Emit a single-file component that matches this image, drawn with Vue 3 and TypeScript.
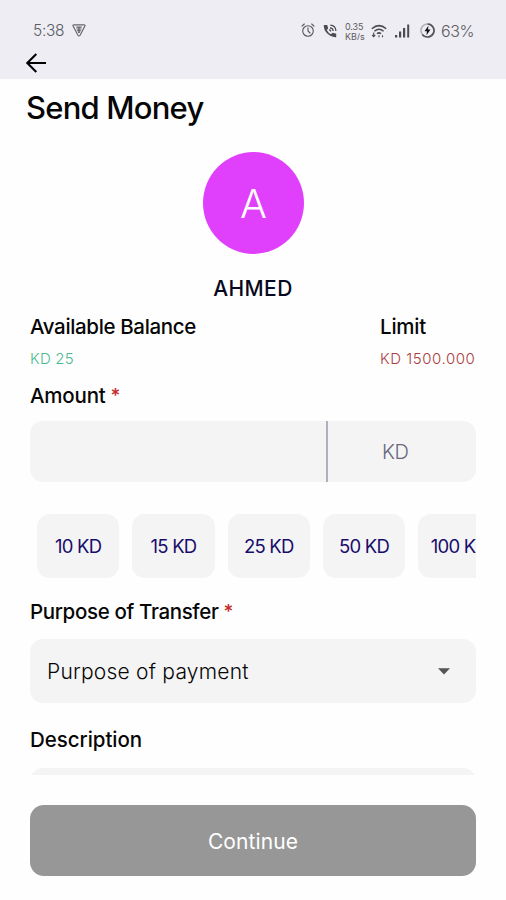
<script setup lang="ts">
import { ref } from 'vue'

interface QuickAmount {
  value: number
  label: string
}

const quickAmounts: QuickAmount[] = [10, 15, 25, 50, 100].map((value) => ({
  value,
  label: `${value} KD`,
}))

const amount = ref('')

function pick(option: QuickAmount): void {
  amount.value = String(option.value)
}
</script>

<template>
  <div class="screen">
    <header class="top">
      <div class="status">
        <span class="clock">5:38</span>
        <svg class="badge" width="14" height="13" viewBox="0 0 14 13" fill="none" stroke="#66666a">
          <path d="M2 .8h10q1.5 0 .9 1.3L8.2 11Q7 13 5.800 11L1.100 2.100Q.5.8 2 .8z" stroke-width="1.200" />
          <path d="M4.300 3.200h5.400M4.500 5h5M5.200 6.700h3.600M6.200 8.400h1.600" stroke-width="1.200" />
          <path d="M7 3v6" stroke-width="1.300" />
        </svg>
        <span class="spacer"></span>
        <svg class="alarm" width="14" height="15" viewBox="0 0 14 15" fill="none" stroke="#55555a" stroke-width="1.100" stroke-linecap="round">
          <circle cx="7" cy="8" r="5.300" />
          <path d="M7 4.800V8l2 2M1 3.200 3.300 1M13 3.200 10.700 1" />
        </svg>
        <svg class="call" width="14" height="14" viewBox="0 0 14 14" fill="none">
          <path d="M.8 1h3.400l1 3.400L3.700 6q1.500 2.900 4.300 4.300l1.600-1.500 3.600 1v3.400Q8.500 13.800 4.500 9.800T.8 1z" fill="#4b4b50" />
          <path d="M7.300 1.200q5.400.3 5.600 5.800M7 3.900q3 .1 3.200 3.100" stroke="#4b4b50" stroke-width="1.200" />
          <path d="M6.300 5.500 8 7.200" stroke="#4b4b50" stroke-width="1.300" />
        </svg>
        <span class="speed"><span>0.35</span><span>KB/s</span></span>
        <svg class="wifi" width="16" height="14" viewBox="0 0 16 14" fill="none" stroke="#4b4b50" stroke-width="1.500">
          <path d="M.8 4.800Q8-1.500 15.200 4.800M3.400 7.300Q8 3.300 12.600 7.300M6 9.800Q8 8 10 9.800" />
          <path d="M8 11.200v2M2.700 8.500v4M1.200 11l1.500 1.600L4.200 11M11.500 11.200v2" stroke-width="1.100" />
        </svg>
        <svg class="signal" width="15" height="14" viewBox="0 0 15 14" fill="#4b4b50">
          <rect x="0" y="11" width="2.200" height="2.500" />
          <rect x="4" y="7.500" width="2.200" height="6" />
          <rect x="8" y="4" width="2.200" height="9.500" />
          <rect x="12.200" y=".5" width="2" height="13" />
        </svg>
        <svg class="charge" width="15" height="15" viewBox="0 0 15 15" fill="none">
          <circle cx="7.500" cy="7.500" r="6.500" stroke="#b4b4ba" stroke-width="1.700" />
          <path d="M7.500 1a6.500 6.500 0 1 1-5.200 10.400" stroke="#55555a" stroke-width="1.700" />
          <path d="M8.400 2.700 4.500 8.300h2.400l-.4 4 4-5.700H8z" fill="#111" />
        </svg>
        <span class="percent">63%</span>
      </div>
      <button class="back" aria-label="Back">
        <svg width="22" height="20" viewBox="0 0 22 20" fill="none" stroke="#000" stroke-width="2.100">
          <path d="M21 10H2.500M11.300 1 2.300 10l9 9" />
        </svg>
      </button>
    </header>

    <main class="content">
      <h1 class="title"><span>Send Money</span></h1>
      <section class="payee">
        <div class="avatar"><span>A</span></div>
        <p class="name"><span>AHMED</span></p>
      </section>

      <section class="figures">
        <div>
          <h2 class="label balance-label"><span>Available Balance</span></h2>
          <p class="figure green"><span>KD 25</span></p>
        </div>
        <div class="limit">
          <h2 class="label"><span>Limit</span></h2>
          <p class="figure red"><span>KD 1500.000</span></p>
        </div>
      </section>

      <h2 class="label amount-label"><span>Amount</span><i>*</i></h2>
      <div class="amount">
        <input v-model="amount" inputmode="decimal" aria-label="Amount" />
        <span class="currency">KD</span>
      </div>

      <div class="chips">
        <button v-for="option in quickAmounts" :key="option.value" class="chip" @click="pick(option)">
          <span>{{ option.label }}</span>
        </button>
      </div>

      <h2 class="label purpose-label"><span>Purpose of Transfer</span><i>*</i></h2>
      <div class="select">
        <span>Purpose of payment</span>
        <svg width="12" height="7" viewBox="0 0 12 7"><path d="M0 .3h12L6 6.500z" fill="#555" /></svg>
      </div>

      <h2 class="label desc-label"><span>Description</span></h2>
      <div class="description"></div>
    </main>

    <footer class="footer">
      <button class="continue"><span>Continue</span></button>
    </footer>
  </div>
</template>

<style>
body {
  margin: 0;
  background: #fefefe;
}
</style>

<style scoped>
.screen {
  display: flex;
  flex-direction: column;
  width: 506px;
  height: 900px;
  overflow: hidden;
  background: #fefefe;
  color: #060606;
  font-family: Inter, 'Liberation Sans', sans-serif;
}
h1, h2, p { margin: 0; font-weight: 450; }
button, input {
  border: 0;
  padding: 0;
  margin: 0;
  background: none;
  font-family: inherit;
  outline: none;
}
svg { display: block; flex: none; }
span { white-space: nowrap; }

.top {
  flex: none;
  box-sizing: border-box;
  height: 79px;
  padding-top: 20px;
  background: #eeedf3;
}
.status {
  display: flex;
  align-items: center;
  height: 21px;
  padding: 0 33px;
  color: #5c5c60;
  font-weight: 300;
}
.clock { width: 32px; font-size: 15.500px; letter-spacing: -0.300px; }
.badge { margin-left: 7px; }
.spacer { flex: 1; }
.call { margin-left: 8px; }
.speed {
  display: flex;
  flex-direction: column;
  width: 20px;
  height: 18px;
  margin-left: 8px;
  overflow: hidden;
  font-size: 9px;
  font-weight: 400;
  line-height: 10px;
  letter-spacing: -0.100px;
}
.wifi { margin-left: 6px; }
.signal { margin-left: 8px; }
.charge { margin-left: 10px; }
.percent { width: 32px; margin-left: 6px; font-size: 16px; letter-spacing: -0.400px; }
.back { display: block; margin: 12px 0 0 25px; }

.content {
  flex: none;
  box-sizing: border-box;
  height: 696px;
  padding: 0 30px;
  overflow: hidden;
}
.title {
  height: 40px;
  margin: 9px 0 0 -4px;
  font-size: 31px;
  line-height: 40px;
  letter-spacing: -0.800px;
}
.payee {
  display: flex;
  flex-direction: column;
  align-items: center;
  margin-top: 24px;
}
.avatar {
  display: grid;
  place-items: center;
  width: 101px;
  height: 102px;
  margin-left: 1px;
  border-radius: 50%;
  background: #e040fb;
  color: #fff;
  font-size: 40px;
  font-weight: 300;
}
.name {
  margin-top: 22px;
  color: #080820;
  font-size: 21px;
  font-weight: 500;
  line-height: 26px;
  letter-spacing: 0.400px;
}
.figures {
  display: flex;
  justify-content: space-between;
  margin-top: 12px;
}
.limit { width: 96px; }
.label {
  height: 26px;
  font-size: 20.500px;
  line-height: 26px;
  letter-spacing: -0.200px;
}
.balance-label { letter-spacing: -0.350px; }
.label i {
  position: relative;
  top: -1px;
  margin-left: 5px;
  color: #c62828;
  font-size: 19px;
  font-style: normal;
  font-weight: 500;
}
.figure {
  height: 20px;
  margin-top: 9px;
  font-size: 15px;
  font-weight: 350;
  line-height: 20px;
  letter-spacing: 0.200px;
}
.green { color: #4dba8c; }
.red { color: #a93c3c; letter-spacing: 0.550px; }
.amount-label { margin-top: 14px; }
.amount {
  display: flex;
  height: 61px;
  margin-top: 12px;
  overflow: hidden;
  border-radius: 13px;
  background: #f4f4f5;
}
.amount input { flex: 1; min-width: 0; padding: 0 16px; font-size: 20px; }
.currency {
  box-sizing: border-box;
  width: 150px;
  padding-left: 54px;
  border-left: 2px solid #afafc1;
  color: #66667c;
  font-size: 20px;
  font-weight: 300;
  line-height: 62px;
  letter-spacing: -0.500px;
}
.chips {
  display: flex;
  gap: 13px;
  margin-top: 32px;
  padding-left: 7px;
  overflow: hidden;
}
.chip {
  flex: none;
  width: 82.300px;
  height: 64px;
  border-radius: 13px;
  background: #f4f4f5;
  color: #180d6b;
  font-size: 18.500px;
  font-weight: 400;
  letter-spacing: -0.800px;
}
.purpose-label { margin-top: 21px; letter-spacing: -0.350px; }
.select {
  display: flex;
  align-items: center;
  justify-content: space-between;
  height: 64px;
  margin-top: 14px;
  padding: 1px 26px 0 17px;
  box-sizing: border-box;
  border-radius: 13px;
  background: #f4f4f4;
  font-size: 21px;
  font-weight: 300;
  letter-spacing: 0.220px;
}
.desc-label { margin-top: 24px; letter-spacing: -0.050px; }
.description {
  height: 64px;
  margin-top: 15px;
  border-radius: 13px;
  background: #f4f4f4;
}
.footer { padding: 30px 30px 0; }
.continue {
  display: block;
  width: 446px;
  height: 71px;
  padding-top: 2px;
  border-radius: 14px;
  background: #979797;
  color: #fff;
  font-size: 21px;
  letter-spacing: 0.100px;
}
</style>
